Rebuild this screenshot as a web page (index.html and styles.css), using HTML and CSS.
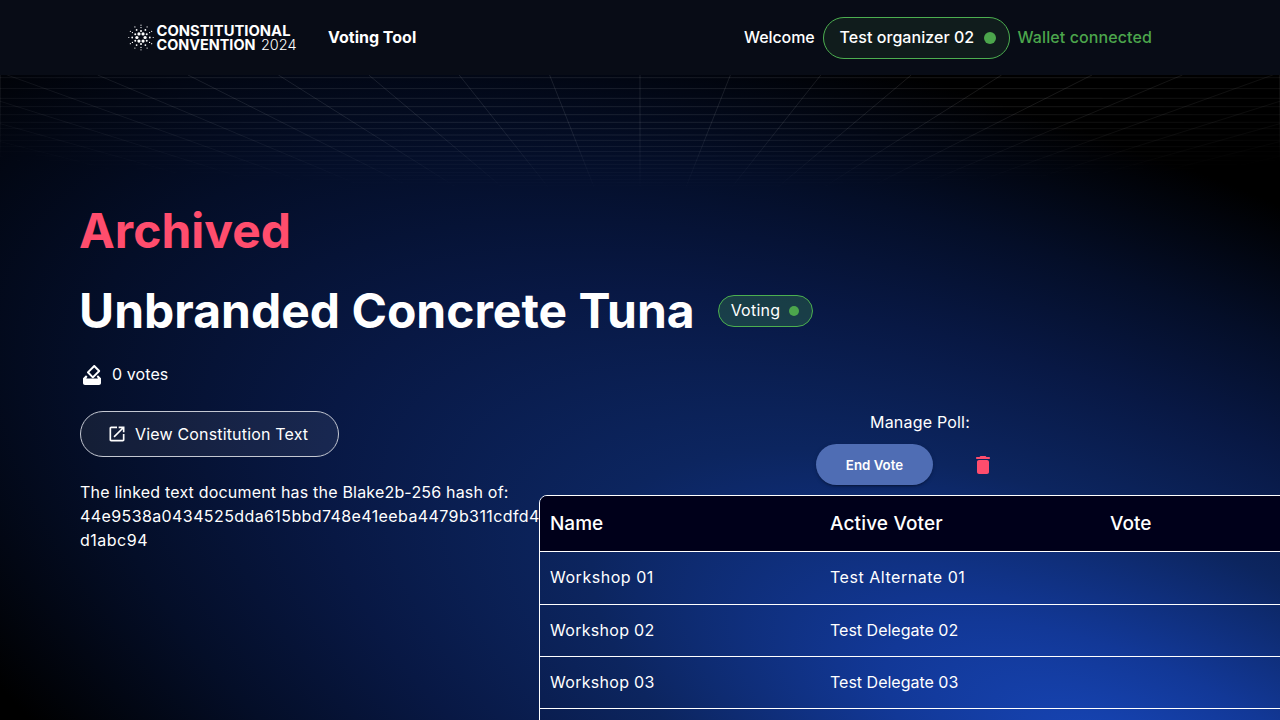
FILE: index.html
```html
<!DOCTYPE html>
<html lang="en">
<head>
<meta charset="utf-8">
<title>Constitutional Convention 2024 - Voting Tool</title>
<link rel="stylesheet" href="styles.css">
</head>
<body>
<svg class="backdrop" viewBox="0 0 1 1" preserveAspectRatio="none" aria-hidden="true">
  <defs>
    <radialGradient id="glow" gradientUnits="userSpaceOnUse" cx="0" cy="0" r="1" gradientTransform="translate(.88 1.06) rotate(227) scale(1.36 .66)">
      <stop offset="0" stop-color="#1746b8"/>
      <stop offset=".18" stop-color="#123897"/>
      <stop offset=".4" stop-color="#0c255f"/>
      <stop offset=".6" stop-color="#081844"/>
      <stop offset=".78" stop-color="#040e28"/>
      <stop offset="1" stop-color="#000"/>
    </radialGradient>
  </defs>
  <rect width="1" height="1" fill="#000"/>
  <rect width="1" height="1" fill="url(#glow)"/>
</svg>
<svg class="grid" viewBox="0 0 1280 115" aria-hidden="true">
  <g id="lines" fill="none" stroke="#fff" stroke-opacity=".095"></g>
</svg>

<header class="topbar">
  <svg class="logo" width="170" height="30" viewBox="0 0 170 30" role="img" aria-label="Constitutional Convention 2024">
    <g id="burst" fill="#fff"></g>
    <text class="logo-bold" x="28.500" y="13.300" textLength="134" lengthAdjust="spacingAndGlyphs">CONSTITUTIONAL</text>
    <text class="logo-bold" x="28.500" y="27" textLength="99" lengthAdjust="spacingAndGlyphs">CONVENTION</text>
    <text class="logo-thin" x="133" y="27" textLength="35.500" lengthAdjust="spacingAndGlyphs">2024</text>
  </svg>
  <span class="product">Voting Tool</span>
  <div class="account">
    <span class="welcome">Welcome</span>
    <span class="user-chip"><span>Test organizer 02</span><i class="dot dot-lg"></i></span>
    <span class="wallet">Wallet connected</span>
  </div>
</header>

<main class="page">
  <h1 class="title archived">Archived</h1>
  <div class="title-row">
    <h1 class="title">Unbranded Concrete Tuna</h1>
    <span class="status-chip"><span>Voting</span><i class="dot"></i></span>
  </div>
  <div class="votes">
    <svg width="24" height="24" viewBox="0 0 24 24" fill="#fff" aria-hidden="true">
      <path d="M17.800 7.950l-4.950 4.950-3.540-3.540 4.950-4.950 3.540 3.540zM13.560 2.290L7.190 8.660c-.390.390-.390 1.020 0 1.410l4.950 4.950c.390.390 1.020.390 1.410 0l6.360-6.360c.390-.390.390-1.020 0-1.410L14.960 2.300c-.380-.400-1.010-.400-1.400-.010z"/>
      <path d="M6 12.200L3 15.200V20c0 1.100.890 2 2 2h14c1.100 0 2-.890 2-2v-4.800l-3-3-1.300 1.400 1.300 1.900H6.200l1.300-1.700z"/>
    </svg>
    <span>0 votes</span>
  </div>
  <div class="columns">
    <section class="details">
      <a class="doc-button">
        <svg width="20" height="20" viewBox="0 0 24 24" fill="#fff" aria-hidden="true"><path d="M19 19H5V5h7V3H5c-1.110 0-2 .900-2 2v14c0 1.100.890 2 2 2h14c1.100 0 2-.900 2-2v-7h-2v7zM14 3v2h3.590l-9.830 9.830 1.410 1.410L19 6.410V10h2V3h-7z"/></svg>
        <span>View Constitution Text</span>
      </a>
      <div class="hash">
        <div class="hash-label">The linked text document has the Blake2b-256 hash of:</div>
        <div class="hash-value">44e9538a0434525dda615bbd748e41eeba4479b311cdfd4</div>
        <div class="hash-tail">d1abc94</div>
      </div>
    </section>
    <section class="manage">
      <div class="manage-label">Manage Poll:</div>
      <div class="actions">
        <button class="end-vote">End Vote</button>
        <button class="delete" aria-label="Delete poll"><svg width="24" height="24" viewBox="0 0 24 24" fill="#ff4d6d" aria-hidden="true"><path d="M6 19c0 1.100.900 2 2 2h8c1.100 0 2-.900 2-2V9c0-1.100-.900-2-2-2H8c-1.100 0-2 .900-2 2v10zM18 4h-2.500l-.710-.710c-.180-.180-.440-.290-.700-.290H9.910c-.260 0-.520.110-.700.290L8.500 4H6c-.550 0-1 .450-1 1s.450 1 1 1h12c.550 0 1-.450 1-1s-.450-1-1-1z"/></svg></button>
      </div>
      <div class="table">
        <div class="row head"><span>Name</span><span class="head-voter">Active Voter</span><span>Vote</span></div>
        <div class="row"><span class="wide">Workshop 01</span><span class="wide">Test Alternate 01</span><span></span></div>
        <div class="row"><span class="mid">Workshop 02</span><span>Test Delegate 02</span><span></span></div>
        <div class="row"><span class="mid">Workshop 03</span><span>Test Delegate 03</span><span></span></div>
        <div class="row"><span></span><span></span><span></span></div>
      </div>
    </section>
  </div>
</main>
<script src="decor.js"></script>
</body>
</html>
```
FILE: styles.css
```css
* { box-sizing: border-box; }
html, body { height: 100%; }
body {
  margin: 0;
  overflow: hidden;
  background: #000;
  color: #fff;
  font: 400 16px/24px Inter, "Liberation Sans", sans-serif;
}
.backdrop { position: absolute; inset: 0; width: 100%; height: 100%; z-index: -2; }
.grid {
  position: absolute;
  top: 75px;
  left: 0;
  width: 1280px;
  height: 115px;
  z-index: -1;
  -webkit-mask-image: radial-gradient(ellipse 960px 117px at 50% 0, #000 45%, transparent 100%);
  mask-image: radial-gradient(ellipse 960px 117px at 50% 0, #000 45%, transparent 100%);
}
.topbar {
  display: flex;
  align-items: center;
  height: 75px;
  padding: 0 128px;
  background: #080c16;
  font-weight: 500;
}
.logo { display: block; flex: none; }
.logo text { fill: #fff; font-family: Inter, "Liberation Sans", sans-serif; font-size: 14.600px; }
.logo .logo-bold { font-weight: 700; }
.logo .logo-thin { font-weight: 300; font-size: 14px; }
.product { margin-left: 30px; padding-bottom: 2px; font-weight: 700; }
.account { display: flex; align-items: center; gap: 8px; margin-left: auto; }
.welcome { padding-bottom: 2px; letter-spacing: -.1px; }
.user-chip {
  display: flex;
  align-items: center;
  width: 187px;
  height: 42px;
  padding: 0 13px 0 16px;
  justify-content: space-between;
  border: 1px solid #4caf50;
  border-radius: 21px;
  background: #101c1c;
  letter-spacing: .05px;
}
.user-chip span, .status-chip span, .votes span { padding-bottom: 2px; }
.wallet { padding-bottom: 2px; color: #4ca64c; letter-spacing: .1px; }
.dot { width: 10px; height: 10px; border-radius: 50%; background: #4ca64c; }
.dot-lg { width: 12px; height: 12px; }
.page { padding: 120px 0 0 80px; }
.title { margin: 0 0 0 -1px; font-size: 48px; line-height: 72px; font-weight: 700; white-space: nowrap; }
.archived { color: #ff4d6d; }
.title-row { display: flex; align-items: center; gap: 23px; margin-top: 8px; }
.status-chip {
  display: flex;
  align-items: center;
  justify-content: space-between;
  width: 95px;
  height: 32px;
  padding: 0 13px 0 12px;
  border: 1px solid #4caf50;
  border-radius: 16px;
  background: rgba(76, 175, 80, .25);
  letter-spacing: .25px;
}
.votes { display: flex; align-items: center; gap: 8px; margin-top: 15px; letter-spacing: .1px; }
.columns { display: flex; margin-top: 23px; }
.details { width: 459px; flex: none; }
.doc-button {
  display: flex;
  align-items: center;
  gap: 8px;
  width: 259px;
  height: 46px;
  padding-left: 26px;
  border: 1px solid #c4c8d2;
  border-radius: 23px;
  background: rgba(255, 255, 255, .065);
  letter-spacing: .17px;
}
.doc-button span { padding-bottom: 1px; }
.hash { margin-top: 23px; white-space: nowrap; }
.hash-label { letter-spacing: .190px; }
.hash-value { letter-spacing: .4px; }
.hash-tail { letter-spacing: .5px; }
.manage { width: 762px; flex: none; }
.manage-label { text-align: center; letter-spacing: .2px; margin-top: -1px; }
.actions { display: flex; align-items: center; padding-left: 277px; margin-top: 10px; }
.end-vote {
  width: 117px;
  height: 41px;
  padding: 0;
  border: 0;
  border-radius: 21px;
  background: #4f6db4;
  color: #fff;
  font: 600 13.300px/20px Inter, "Liberation Sans", sans-serif;
  box-shadow: 0 3px 1px -2px rgba(0,0,0,.2), 0 2px 2px rgba(0,0,0,.14), 0 1px 5px rgba(0,0,0,.12);
}
.delete { display: flex; margin-left: 38px; padding: 0; border: 0; background: none; }
.votes, .columns { position: static; }
.table { width: 1122px; margin-top: 10px; border: 1px solid #fff; border-radius: 8px; overflow: hidden; }
.row {
  display: grid;
  grid-template-columns: 280px 280px 560px;
  align-items: center;
  height: 52px;
  border-bottom: 1px solid #fff;
}
.row span { padding: 0 0 2px 10px; }
.row .wide { letter-spacing: .53px; }
.row .mid { letter-spacing: .3px; }
.row.head { height: 56px; background: #00001a; font-size: 19px; font-weight: 500; }
.row.head span { padding-bottom: 0; }
.row .head-voter { letter-spacing: .15px; }
.head + .row { height: 53px; }
.title-row + .votes { margin-top: 16px; }
.votes + .columns { margin-top: 24px; }
.votes { height: 24px; }
```
FILE: decor.js
```js
const NS = "http://www.w3.org/2000/svg";
const add = (parent, name, attrs) => {
  const el = document.createElementNS(NS, name);
  for (const k in attrs) el.setAttribute(k, attrs[k]);
  parent.append(el);
};

// Perspective floor: rays toward a vanishing point under the header, plus cross lines.
const lines = document.getElementById("lines");
for (let k = -14; k <= 14; k++) {
  const x = 640 + k * 90.4;
  add(lines, "path", { d: `M${x} 0L${640 + (x - 640) * (1 - 115 / 228)} 115` });
}
for (const y of [2.7, 13.6, 23.3, 31.7, 39.7, 47.3, 53.7, 60, 65.3, 71.6, 76.6, 81, 85.3, 89.3, 93.3, 97.3, 100.7, 104.3, 107.5, 110.7]) {
  add(lines, "path", { d: `M0 ${y}H1280` });
}
add(lines, "path", { d: "M.5 0V115M1279.5 0V115" });

// Logo mark: hexagonal rings of dots.
const burst = document.getElementById("burst");
const ring = (r, size, start, n) => {
  for (let i = 0; i < n; i++) {
    const a = (start + i * 360 / n) * Math.PI / 180;
    add(burst, "circle", { cx: (13 + r * Math.cos(a)).toFixed(2), cy: (14.5 + r * Math.sin(a)).toFixed(2), r: size });
  }
};
ring(4.1, 1.6, 0, 6);
ring(6.6, 1, 30, 6);
ring(8.8, .9, 0, 6);
ring(9.9, .65, 30, 6);
ring(12.2, .6, 0, 6);
ring(12.3, .6, 30, 6);
```
